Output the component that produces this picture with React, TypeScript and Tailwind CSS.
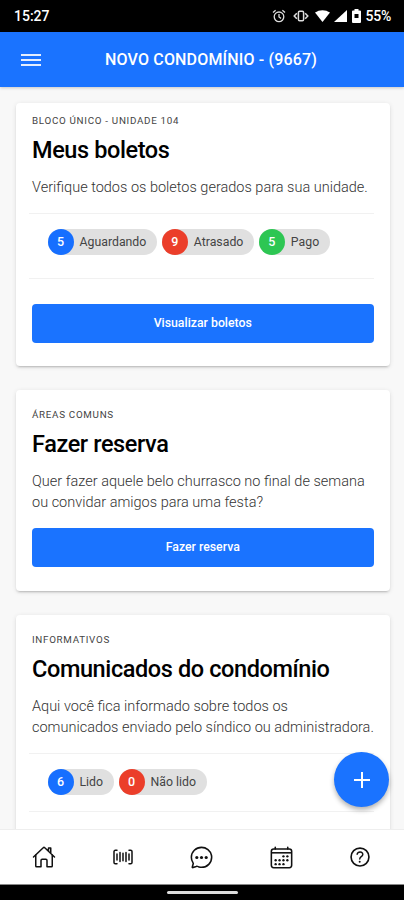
import React from 'react';
import {
  IoHomeOutline,
  IoBarcodeOutline,
  IoChatbubbleEllipsesOutline,
  IoCalendarOutline,
  IoHelpCircleOutline,
} from 'react-icons/io5';
import { clsx } from 'clsx';

interface Chip {
  count: number;
  label: string;
  color: 'blue' | 'red' | 'green';
}

interface CardProps {
  overline: string;
  title: string;
  className?: string;
  children: React.ReactNode;
}

const badgeColors = {
  blue: 'bg-[#166fff]',
  red: 'bg-[#eb3e2a]',
  green: 'bg-[#2dc653]',
};

const boletos: Chip[] = [
  { count: 5, label: 'Aguardando', color: 'blue' },
  { count: 9, label: 'Atrasado', color: 'red' },
  { count: 5, label: 'Pago', color: 'green' },
];

const comunicados: Chip[] = [
  { count: 6, label: 'Lido', color: 'blue' },
  { count: 0, label: 'Não lido', color: 'red' },
];

const StatusBar: React.FC = () => (
  <div className="flex h-8 shrink-0 items-center justify-between bg-black pl-[14px] pr-[13px] text-white">
    <span className="pt-px text-[14px] font-medium">15:27</span>
    <div className="flex items-center">
      {/* Alarm */}
      <svg className="h-[14px] w-[14px]" viewBox="0 0 14 14" fill="none" stroke="#ddd" strokeWidth="1.3">
        <circle cx="7" cy="7.8" r="4.8" />
        <path d="M7 5v3l2 1.4M1 3.4l2.6-2.2M13 3.4l-2.6-2.2" />
      </svg>
      {/* Vibrate */}
      <svg className="ml-[7px] h-3 w-4" viewBox="0 0 16 12" fill="none" stroke="#ddd" strokeWidth="1.5">
        <rect x="5.4" y="1.2" width="5.2" height="9.6" rx="1.2" />
        <path d="M3.8 3.2 1.2 6l2.6 2.8M12.2 3.2 14.8 6l-2.6 2.8" />
      </svg>
      {/* Wi-Fi */}
      <svg className="ml-[6px] h-3 w-[15px]" viewBox="0 0 15 12" fill="#fff">
        <path d="M0 2.6C4.3-.7 10.7-.7 15 2.6L7.5 12z" />
      </svg>
      {/* Signal */}
      <svg className="ml-1 h-3 w-[13px]" viewBox="0 0 13 12" fill="#fff">
        <path d="M13 0v12H0z" />
      </svg>
      {/* Battery */}
      <svg className="ml-[5px] h-[14px] w-[9px]" viewBox="0 0 9 14">
        <path d="M2.5 0h4v1.4H8q1 0 1 1V13q0 1-1 1H1q-1 0-1-1V2.4q0-1 1-1h1.5z" fill="#fff" />
        <path d="M2.5 5h4v4h-4z" fill="#000" />
      </svg>
      <span className="ml-[4px] pt-px text-[14px] font-medium tracking-[-0.2px]">55%</span>
    </div>
  </div>
);

const Card: React.FC<CardProps> = ({ overline, title, className, children }) => (
  <section
    className={clsx(
      'mx-4 mr-[14.5px] shrink-0 rounded-[4px] bg-white px-4',
      'shadow-[0_3px_1px_-2px_rgba(0,0,0,0.1),0_2px_2px_0_rgba(0,0,0,0.07),0_1px_5px_0_rgba(0,0,0,0.1)]',
      className
    )}
  >
    <p className="whitespace-nowrap text-[9.8px] leading-[11px] tracking-[0.7px] text-[#444]">{overline}</p>
    <h2 className="mt-[10px] whitespace-nowrap text-[23.5px] font-medium leading-7 tracking-[-0.4px] text-black">
      {title}
    </h2>
    {children}
  </section>
);

const Text: React.FC<{ children: React.ReactNode }> = ({ children }) => (
  <p className="mt-[14px] whitespace-nowrap text-[14.5px] font-light leading-[20.5px] text-[#333]">
    {children}
  </p>
);

const Chips: React.FC<{ items: Chip[]; className?: string }> = ({ items, className }) => (
  <div className={clsx('-ml-[3px] flex gap-[4.5px] border-y border-[#f1f1f1] pl-[18.5px] pt-[15px]', className)}>
    {items.map((item) => (
      <div
        key={item.label}
        className="flex h-[26px] items-center rounded-full bg-[#e0e0e0] pr-[11px] text-[12.3px] text-[#444]"
      >
        <span
          className={clsx(
            'mr-[6px] flex size-[26px] items-center justify-center rounded-full text-[12.5px] font-medium text-white',
            badgeColors[item.color]
          )}
        >
          {item.count}
        </span>
        {item.label}
      </div>
    ))}
  </div>
);

const PrimaryButton: React.FC<{ children: React.ReactNode; className?: string }> = ({ children, className }) => (
  <button
    className={clsx(
      'block h-[39px] w-full rounded-[4px] bg-[#1a73ff] text-[12.3px] font-medium text-white',
      className
    )}
  >
    {children}
  </button>
);

const App: React.FC = () => {
  return (
    <div className="relative flex h-[900px] w-[404px] flex-col overflow-hidden bg-[#f8f8f8] font-['Roboto',sans-serif]">
      <StatusBar />

      <header className="grid h-[55px] shrink-0 grid-cols-[105px_1fr] items-center bg-[#1a73ff] text-white shadow-[0_1px_3px_rgba(0,0,0,0.2)]">
        <svg className="ml-[21px] h-[14px] w-5" viewBox="0 0 20 14" fill="none" stroke="#e4eeff" strokeWidth="1.8">
          <path d="M0 2h20M0 7h20M0 12h20" />
        </svg>
        <h1 className="whitespace-nowrap text-[16px] font-medium tracking-[0.17px]">NOVO CONDOMÍNIO - (9667)</h1>
      </header>

      <main className="flex min-h-0 flex-1 flex-col gap-6 overflow-hidden pt-4">
        <Card overline="BLOCO ÚNICO - UNIDADE 104" title="Meus boletos" className="h-[263px] pt-[12px]">
          <Text>Verifique todos os boletos gerados para sua unidade.</Text>
          <Chips items={boletos} className="mt-[14.5px] h-[66px]" />
          <PrimaryButton className="mt-[25px]">Visualizar boletos</PrimaryButton>
        </Card>

        <Card overline="ÁREAS COMUNS" title="Fazer reserva" className="h-[201px] pt-[19px]">
          <Text>
            Quer fazer aquele belo churrasco no final de semana
            <br />
            ou convidar amigos para uma festa?
          </Text>
          <PrimaryButton className="mt-[15px]">Fazer reserva</PrimaryButton>
        </Card>

        <Card overline="INFORMATIVOS" title="Comunicados do condomínio" className="h-[263px] pt-[19px]">
          <Text>
            Aqui você fica informado sobre todos os
            <br />
            comunicados enviado pelo síndico ou administradora.
          </Text>
          <Chips items={comunicados} className="mt-[15px] h-[59px]" />
        </Card>
      </main>

      {/* Floating action button */}
      <button className="absolute right-[15px] top-[752px] flex size-[55px] items-center justify-center rounded-full bg-[#1a73ff] shadow-[0_3px_5px_rgba(0,0,0,0.3)]">
        <svg className="size-4" viewBox="0 0 16 16" stroke="#fff" strokeWidth="2">
          <path d="M8 0v16M0 8h16" />
        </svg>
      </button>

      <nav className="grid h-[55px] shrink-0 grid-cols-5 items-center justify-items-center border-t border-[#eee] bg-white px-[4px] text-[#111]">
        <IoHomeOutline className="size-6" />
        <IoBarcodeOutline className="size-6" />
        <IoChatbubbleEllipsesOutline className="size-[25px]" />
        <IoCalendarOutline className="size-[25px]" />
        <IoHelpCircleOutline className="size-[26px]" />
      </nav>

      <div className="flex h-4 shrink-0 items-center justify-center border-t border-[#888] bg-black">
        <div className="h-[3px] w-[71px] rounded-full bg-[#ddd]" />
      </div>
    </div>
  );
};

export default App;
